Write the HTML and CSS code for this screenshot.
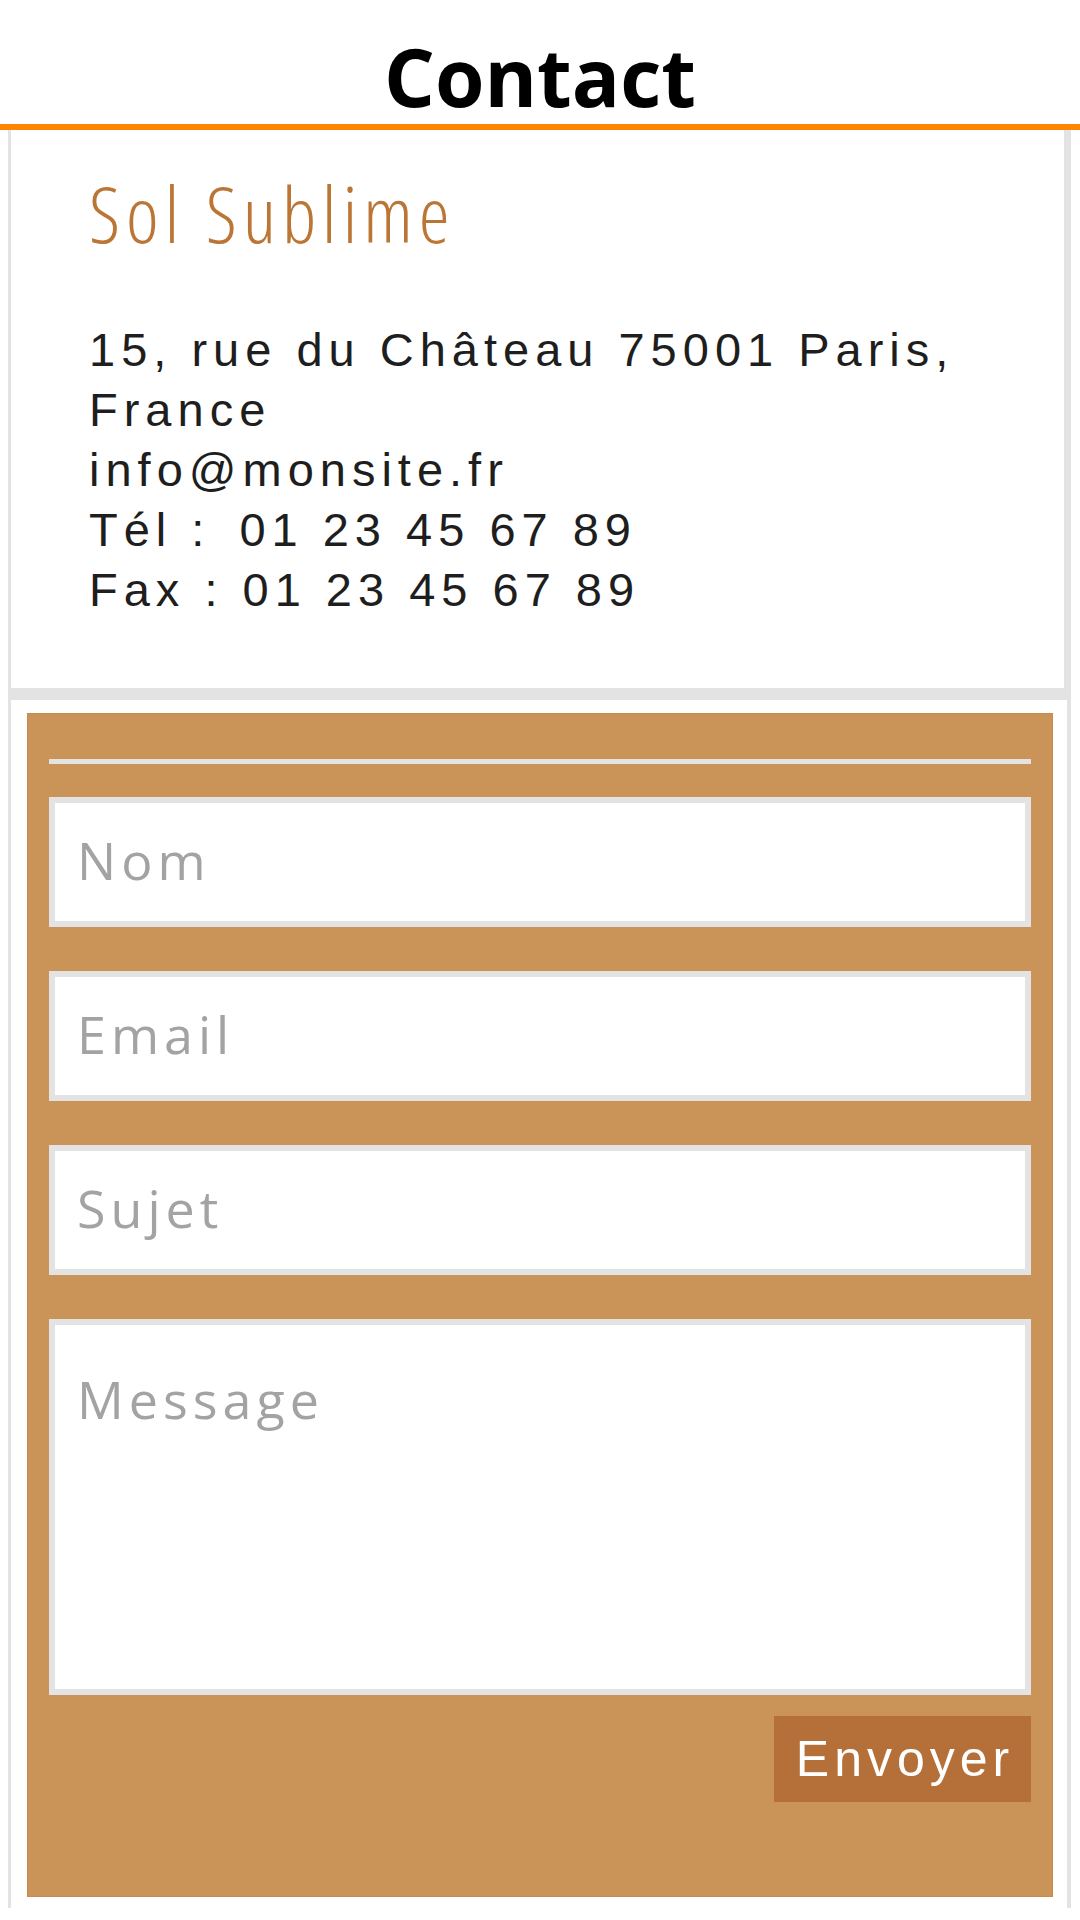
FILE: index.html
```html
<!DOCTYPE html>
<html lang="fr">
<head>
<meta charset="utf-8">
<title>Contact</title>
<link rel="stylesheet" href="styles.css">
</head>
<body>
<header class="top">
  <h1 class="title">Contact</h1>
</header>
<main class="wrap">
  <section class="info-card">
    <h2 class="brand">Sol Sublime</h2>
    <p class="address">15, rue du Château 75001 Paris, France<br>info@monsite.fr<br>Tél :&#8202; 01 23 45 67 89<br>Fax : 01 23 45 67 89</p>
  </section>
  <section class="form-card">
    <form class="form-box">
      <hr class="rule">
      <input class="field" type="text" placeholder="Nom">
      <input class="field" type="text" placeholder="Email">
      <input class="field" type="text" placeholder="Sujet">
      <textarea class="field field-msg" placeholder="Message"></textarea>
      <div class="actions"><button class="send" type="button">Envoyer</button></div>
    </form>
  </section>
</main>
</body>
</html>
```

FILE: styles.css
```css
* { box-sizing: border-box; }
html, body { margin: 0; padding: 0; background: #ffffff; }
body { width: 1080px; height: 1920px; overflow: hidden; }

.top {
  height: 130px;
  border-bottom: 6px solid #ff8500;
  padding-top: 27px;
  text-align: center;
}
.title {
  margin: 0;
  font-family: "Open Sans", sans-serif;
  font-weight: 700;
  font-size: 80px;
  line-height: 97px;
  color: #000;
}

.wrap {
  margin-left: 8px;
  width: 1063px;
}

.info-card {
  border-left: 3px solid #e3e3e3;
  border-right: 7px solid #e3e3e3;
  border-bottom: 12px solid #e3e3e3;
  padding: 33px 40px 68px 78px;
}
.brand {
  margin: 0;
  font-family: "Open Sans", sans-serif;
  font-weight: 300;
  font-stretch: 75%;
  font-size: 78px;
  line-height: 100px;
  letter-spacing: 6px;
  color: #bb7535;
}
.address {
  margin: 57px 0 0 0;
  font-family: "Liberation Sans", Arial, sans-serif;
  font-size: 47px;
  line-height: 60px;
  letter-spacing: 6px;
  color: #1e1e1e;
}

.form-card {
  border-left: 3px solid #e3e3e3;
  border-right: 4px solid #e3e3e3;
  padding: 13px 14px 11px 16px;
}
.form-box {
  background: #ca9358;
  border: 1px solid #c88a4c;
  padding: 45px 21px 94px 21px;
  display: flex;
  flex-direction: column;
}
.rule {
  margin: 0 0 33px 0;
  height: 5px;
  border: none;
  background: #e3e3e3;
}
.field {
  display: block;
  width: 100%;
  height: 130px;
  margin: 0 0 44px 0;
  border: 6px solid #e3e3e3;
  background: #fff;
  padding: 0 20px 6px 22px;
  font-family: "Open Sans", sans-serif;
  font-size: 52px;
  letter-spacing: 5px;
  color: #444;
  outline: none;
  border-radius: 0;
}
.field::placeholder {
  color: #a3a3a3;
  letter-spacing: 5px;
  opacity: 1;
}
.field-msg {
  height: 376px;
  margin-bottom: 21px;
  padding: 38px 20px 0 22px;
  resize: none;
  line-height: normal;
}
.actions {
  display: flex;
  justify-content: flex-end;
}
.send {
  width: 257px;
  height: 86px;
  border: none;
  border-radius: 0;
  background: #b5703a;
  color: #fff;
  font-family: "Liberation Sans", Arial, sans-serif;
  font-size: 50px;
  letter-spacing: 5px;
  padding: 0 0 0 5px;
}
```
